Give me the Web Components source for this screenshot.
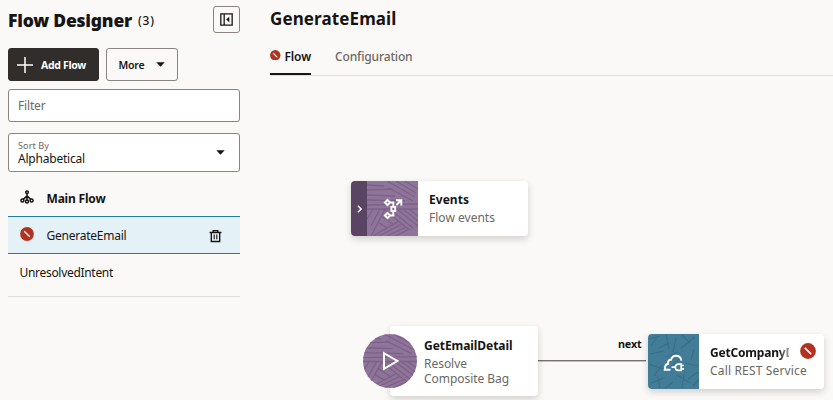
<!DOCTYPE html>
<html lang="en">
<head>
<meta charset="utf-8">
<title>Flow Designer</title>
<style>
body{margin:0;width:833px;height:400px;overflow:hidden;background:#fbf9f8;font-family:"Noto Sans","Open Sans",sans-serif;color:#161513}
</style>
</head>
<body>
<flow-app></flow-app>
<script>
const define=(name,html,init)=>customElements.define(name,class extends HTMLElement{
  constructor(){super();this.attachShadow({mode:'open'});}
  connectedCallback(){
    if(!this.shadowRoot.firstChild){
      const t=document.createElement('template');
      t.innerHTML=html;
      this.shadowRoot.append(t.content.cloneNode(true));
    }
    if(init)init(this,this.shadowRoot);
  }
});

/* Text line whose tracking is set so that it spans "fit" pixels. */
define('ui-label',`<style>:host{display:block;white-space:nowrap;font-size:12px;line-height:16px;width:max-content}span{display:inline-block}</style><span><slot></slot></span>`,(el,r)=>{
  const s=r.querySelector('span'),fit=+el.getAttribute('fit');
  if(el.hasAttribute('size'))el.style.fontSize=el.getAttribute('size')+'px';
  if(el.hasAttribute('weight'))el.style.fontWeight=el.getAttribute('weight');
  if(fit){
    const n=el.textContent.length;
    s.style.letterSpacing=((fit-s.getBoundingClientRect().width)/n).toFixed(3)+'px';
  }
});

const icons={
 error:`<svg viewBox="0 0 14 14"><circle cx="7" cy="7" r="6.9" fill="#b3311f"/><path d="M4.2 4.3l5.600 5.400" stroke="#fff" stroke-width="1.400"/></svg>`,
 panel:`<svg viewBox="0 0 14 14" fill="none" stroke="#161513" stroke-width="1.4"><path d="M.9.9h12.200v12.200H.9zM4.500 1v12"/><path d="M10 4L6.600 7 10 10z" fill="#161513" stroke="none"/></svg>`,
 plus:`<svg viewBox="0 0 16 16" stroke="#fff" stroke-width="1.5"><path d="M8 0v16M0 8h16"/></svg>`,
 caret:`<svg viewBox="0 0 10 5"><path d="M.3 0h9.4L5 5z" fill="#161513"/></svg>`,
 tree:`<svg viewBox="0 0 14 14" fill="none" stroke="#161513" stroke-width="1.5"><circle cx="7" cy="2.300" r="1.3"/><circle cx="2.4" cy="10.6" r="1.5"/><circle cx="7" cy="11.5" r="1.5"/><circle cx="11.6" cy="10.6" r="1.5"/><path d="M7 3.500V10M6.8 6L3.300 9.400M7.200 6l3.500 3.400"/></svg>`,
 trash:`<svg viewBox="0 0 14 14" fill="none" stroke="#161513" stroke-width="1.5"><path d="M.6 3.200h12.800M4.500 3V1.200h5V3M2.500 3v9.900h9V3"/><path d="M5.600 5.500v5M8.400 5.500v5" stroke-width="1.2"/></svg>`,
 chevron:`<svg viewBox="0 0 5 8"><path d="M.9.7L4.1 4 .9 7.3" fill="none" stroke="#fff" stroke-width="1.5"/></svg>`,
 events:`<svg viewBox="0 0 20 22" fill="none" stroke="#fff" stroke-width="1.9"><path d="M4.5 1.9L7.1 4.5 4.5 7.1 1.900 4.5zM4.5 14.900l2.600 2.600-2.600 2.600-2.600-2.600zM7.300 4.5h3v4M7.300 17.500h3v-4.500M8.400 8.900h3.800v4.200H8.400zM13.300 7.200L18 2.500M13 2.300h5.300v5.300"/></svg>`,
 play:`<svg viewBox="0 0 18 20"><path d="M2 2.2v15.6L15.4 10z" fill="none" stroke="#fff" stroke-width="2"/></svg>`,
 rest:`<svg viewBox="0 0 22 18" fill="none" stroke="#fff" stroke-width="1.9"><path d="M7.500 15.800H1.700l.5-3.200c.2-1.600 1.300-2.600 2.900-2.600-.3-2.800.6-4.300 2.900-4.200C8.700 3.200 10.400 1.700 13 1.700c3 0 5 2 5.300 4.900"/><path d="M8.500 13.200h3.500M18.200 10.100h-2.600c-2 0-3.300 1.300-3.300 3.100s1.300 3.100 3.300 3.100h2.600zM18.500 11.500h2.500M18.500 14.900h2.500" stroke-width="1.700"/></svg>`
};
define('ui-icon',`<style>:host{display:block;flex:none}svg{display:block;width:100%;height:100%}</style>`,(el,r)=>{
  r.innerHTML+=icons[el.getAttribute('name')];
});

define('ui-button',`<style>
:host{display:flex;align-items:center;box-sizing:border-box;height:33px;border:1px solid #8b8580;border-radius:3px}
:host([primary]){background:#312d2a;border-color:#312d2a;color:#fff}
</style><slot></slot>`);

define('ui-field',`<style>
:host{display:flex;justify-content:space-between;align-items:center;box-sizing:border-box;width:232px;border:1px solid #8b8580;border-radius:3px;background:#fff;padding:0 14px 0 9px}
</style><div><slot></slot></div><slot name="end"></slot>`);

define('flow-row',`<style>
:host{display:flex;align-items:center;height:36px;box-sizing:border-box;padding:2px 0 0 11.500px}
:host([selected]){height:38px;background:#e4f1f7;border-top:1px solid #227e9e;border-bottom:1px solid #227e9e}
.end{margin-left:auto;padding-right:18.500px}
</style><slot></slot><div class="end"><slot name="end"></slot></div>`);

define('flow-sidebar',`<style>
:host{display:block;box-sizing:border-box;width:262px;height:400px;padding:6px 0 0 8px}
.head,.actions{display:flex;width:232px}
.head{height:27px;justify-content:space-between}
.title{display:flex;gap:6px}
.collapse{width:27px;height:27px;justify-content:center}
.actions{margin-top:15px;gap:7px}
.muted{color:#6b6762}
.list{width:232px;border-bottom:1px solid #dfdcd9;padding-top:8px;height:116px}
</style>
<div class="head"><div class="title"><ui-label fit="124" size="17.5" weight="900" style="line-height:29px">Flow Designer</ui-label><ui-label fit="17" size="12" weight="500" style="line-height:29px">(3)</ui-label></div>
<ui-button class="collapse"><ui-icon name="panel" style="width:13px;height:13px"></ui-icon></ui-button></div>
<div class="actions">
<ui-button primary style="width:91px;padding-left:8px;gap:8px"><ui-icon name="plus" style="width:16px;height:16px"></ui-icon><ui-label fit="45" size="10.500" weight="700">Add Flow</ui-label></ui-button>
<ui-button style="width:72px;padding-left:11.500px;gap:11px"><ui-label fit="26" size="10.500" weight="600">More</ui-label><ui-icon name="caret" style="width:9px;height:5px"></ui-icon></ui-button></div>
<ui-field style="height:33px;margin-top:8px"><ui-label class="muted" fit="27.500">Filter</ui-label></ui-field>
<ui-field style="height:39px;margin-top:11px"><ui-label class="muted" fit="31" size="9" style="line-height:12px;padding-top:1px">Sort By</ui-label><ui-label fit="67" style="line-height:14px">Alphabetical</ui-label><ui-icon slot="end" name="caret" style="width:9px;height:5px"></ui-icon></ui-field>
<div class="list">
<flow-row><ui-icon name="tree" style="width:14px;height:14px;margin:-5px 13px 0 0"></ui-icon><ui-label fit="59" weight="700">Main Flow</ui-label></flow-row>
<flow-row selected><ui-icon name="error" style="width:14px;height:14px;margin:-5px 13px 0 0"></ui-icon><ui-label fit="80">GenerateEmail</ui-label><ui-icon slot="end" name="trash" style="width:13px;height:14px"></ui-icon></flow-row>
<flow-row><ui-label fit="93.500">UnresolvedIntent</ui-label></flow-row>
</div>`);

define('flow-header',`<style>
:host{display:block;padding-left:8px}
.tabs{display:flex;gap:24px;border-bottom:1px solid #e0dedb;height:29px;margin-top:14px}
.tab{display:flex;gap:4px;padding-top:3px;height:23px;color:#6b6762}
.active{color:#161513;border-bottom:2px solid #161513;width:41px;height:24px}
h1{margin:0;padding-top:6px}
</style><h1><ui-label fit="126.500" size="17" weight="700" style="line-height:26px">GenerateEmail</ui-label></h1>
<div class="tabs"><div class="tab active"><ui-icon name="error" style="width:10.500px;height:10.500px;margin-top:.5px"></ui-icon><ui-label fit="26.500" weight="600">Flow</ui-label></div><div class="tab"><ui-label fit="77.500" weight="500">Configuration</ui-label></div></div>`);

/* Woven band artwork behind node icons. */
define('node-art',`<style>
:host{display:flex;align-items:center;justify-content:center;position:relative;overflow:hidden;flex:none;width:51px;height:55px;background:#8f7499}
.tex{position:absolute;inset:0;width:100%;height:100%}
slot{display:block;position:relative}
</style><slot></slot>`,(el,r)=>{
  const weave=`<g fill="none" stroke="#7c6188" stroke-width="1.300"><path d="M0 4l17 1M0 9l26-1M0 14l28 1M0 19l38 1M0 24l51-1M20 0l28 16M29 0l20 12M38 0l13 8M22 7l24 13M0 28h51M4 55l14-27M4 45l9-17M0 38l6-10M6 55l26-15M12 55l23-12M20 55l19-9M28 55l15-7M18 29l23 19M24 29l22 18M30 28l21 17M36 28l15 12M42 28l9 7M14 35l13 9M11 41l9 6"/></g>`;
  const twigs=`<g fill="none" stroke="#386f88" stroke-width="1.200"><path d="M1 5l11-3M3 12l6-9M11 14l10-5M18 1l3 14M28 4l-3 14M34 1l8 8M33 14l14-11M46 15l-3 11M2 20l14-3M1 30l14 5M6 42l8-11M25 48l-8 6M3 49l13-5M12 54l-2-11M29 41l13 8M34 54l2-14M40 45l10-7M45 52l6-7M37 29l12 3M18 23l12-5M22 34l9-9"/></g>`;
  r.innerHTML+=`<svg class="tex" viewBox="0 0 51 55" preserveAspectRatio="none">${el.hasAttribute('teal')?twigs:weave}</svg>`;
  r.append(r.querySelector('slot'));
});

define('flow-node',`<style>
:host{display:flex;position:absolute;box-sizing:border-box;background:#fff;border-radius:4px;box-shadow:0 3px 7px rgba(22,21,19,.18)}
.side{display:flex;overflow:hidden;border-radius:4px 0 0 4px}
:host([round]) .side{overflow:visible}
.text{padding-left:11px}
</style><div class="side"><slot name="art"></slot></div><div class="text"><slot></slot></div><slot name="badge"></slot>`);

define('flow-canvas',`<style>
:host{display:block;position:relative;height:324px;overflow:hidden}
.handle{display:flex;align-items:center;justify-content:center;width:16px;height:55px;background:#594463}
.sub{color:#6b6762}
.link{position:absolute;left:276px;top:284px;width:108px;height:1.500px;background:#77706b;border-bottom:1px solid #c5c0bc;box-sizing:border-box;height:2px}
.next{position:absolute;left:356px;top:260px}
.fade{-webkit-mask-image:linear-gradient(90deg,#000 68px,transparent 86px);mask-image:linear-gradient(90deg,#000 68px,transparent 86px);width:79px;overflow:hidden}
.badge{position:absolute;right:8px;top:9px;width:16px;height:16px}
</style>
<div class="link"></div><ui-label class="next" fit="23.500" size="10.800" weight="700">next</ui-label>
<flow-node style="left:89px;top:105px;width:177px;height:55px">
<div slot="art" class="handle"><ui-icon name="chevron" style="width:5px;height:8px"></ui-icon></div>
<node-art slot="art"><ui-icon name="events" style="width:20px;height:22px"></ui-icon></node-art>
<ui-label fit="40" weight="700" style="margin-top:11px">Events</ui-label><ui-label class="sub" fit="66" style="margin-top:2px">Flow events</ui-label></flow-node>
<flow-node round style="left:128px;top:250px;width:148px;height:70px">
<node-art slot="art" style="width:54px;height:54px;border-radius:50%;margin:8px 0 0 -27px"><ui-icon name="play" style="width:18px;height:20px;margin-left:2px"></ui-icon></node-art>
<ui-label fit="88.500" weight="700" style="margin:12px 0 0 -4px">GetEmailDetail</ui-label><ui-label class="sub" fit="43" style="margin:2px 0 0 -4px">Resolve</ui-label><ui-label class="sub" fit="85" style="margin:-1px 0 0 -4px">Composite Bag</ui-label></flow-node>
<flow-node style="left:386px;top:258px;width:176px;height:55px">
<node-art teal slot="art" style="background:#427c96"><ui-icon name="rest" style="width:22px;height:18px;margin-top:2px"></ui-icon></node-art>
<ui-label class="fade" fit="84" weight="700" style="margin-top:11px">GetCompanyD</ui-label><ui-label class="sub" fit="97" style="margin-top:2px">Call REST Service</ui-label>
<ui-icon slot="badge" class="badge" name="error"></ui-icon></flow-node>`);

define('flow-app',`<style>:host{display:flex;height:400px}main{flex:1;min-width:0}</style><flow-sidebar></flow-sidebar><main><flow-header></flow-header><flow-canvas></flow-canvas></main>`);
</script>
</body>
</html>
